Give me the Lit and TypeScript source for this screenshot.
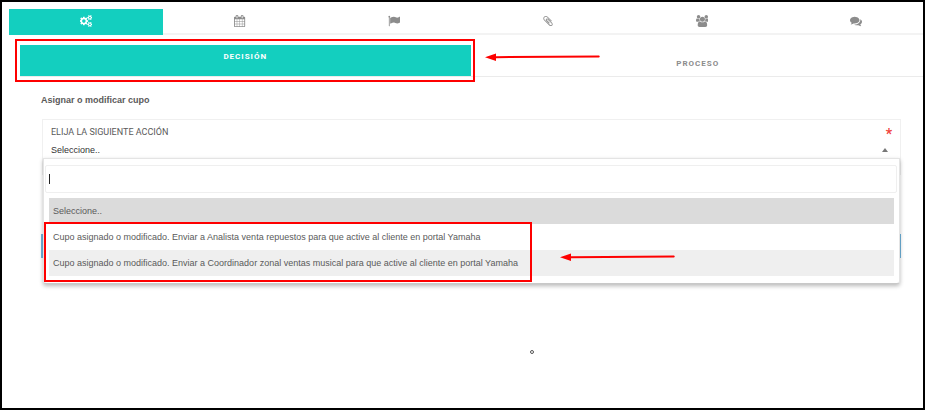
import { LitElement, html, css, svg } from "lit";
import { customElement, state } from "lit/decorators.js";
import { classMap } from "lit/directives/class-map.js";

interface Icon {
  label: string;
  box: string;
  path: string;
}

const ICONS: Icon[] = [
  {
    label: "Acciones",
    box: "0 0 1920 1792",
    path: "M832 896q0-106-75-181t-181-75-181 75-75 181 75 181 181 75 181-75 75-181zm768 512q0-52-38-90t-90-38-90 38-38 90q0 53 37.5 90.5t90.5 37.5 90.5-37.5 37.5-90.5zm0-1024q0-52-38-90t-90-38-90 38-38 90q0 53 37.5 90.5t90.5 37.5 90.5-37.5 37.5-90.5zm-384 421v185q0 10-7 19.5t-16 10.5l-155 24q-11 35-32 76 34 48 90 115 7 11 7 20 0 12-7 19-23 30-82.5 89.5t-78.5 59.5q-11 0-21-7l-115-90q-37 19-77 31-11 108-23 155-7 24-30 24h-186q-11 0-20-7.5t-10-17.5l-23-153q-34-10-75-31l-118 89q-7 7-20 7-11 0-21-8-144-133-144-160 0-9 7-19 10-14 41-53t47-61q-23-44-35-82l-152-24q-10-1-17-9.5t-7-19.5v-185q0-10 7-19.5t16-10.5l155-24q11-35 32-76-34-48-90-115-7-11-7-20 0-12 7-20 22-30 82-89t79-59q11 0 21 7l115 90q34-18 77-32 11-108 23-154 7-24 30-24h186q11 0 20 7.5t10 17.5l23 153q34 10 75 31l118-89q8-7 20-7 11 0 21 8 144 133 144 160 0 8-7 19-12 16-42 54t-45 60q23 48 34 82l152 23q10 2 17 10.5t7 19.5zm640 533v140q0 16-149 31-12 27-30 52 51 113 51 138 0 4-4 7-122 71-124 71-8 0-46-47t-52-68q-20 2-30 2t-30-2q-14 21-52 68t-46 47q-2 0-124-71-4-3-4-7 0-25 51-138-18-25-30-52-149-15-149-31v-140q0-16 149-31 13-29 30-52-51-113-51-138 0-4 4-7 4-2 35-20t59-34 30-16q8 0 46 46.5t52 67.5q20-2 30-2t30 2q51-71 92-112l6-2q4 0 124 70 4 3 4 7 0 25-51 138 17 23 30 52 149 15 149 31zm0-1024v140q0 16-149 31-12 27-30 52 51 113 51 138 0 4-4 7-122 71-124 71-8 0-46-47t-52-68q-20 2-30 2t-30-2q-14 21-52 68t-46 47q-2 0-124-71-4-3-4-7 0-25 51-138-18-25-30-52-149-15-149-31v-140q0-16 149-31 13-29 30-52-51-113-51-138 0-4 4-7 4-2 35-20t59-34 30-16q8 0 46 46.5t52 67.5q20-2 30-2t30 2q51-71 92-112l6-2q4 0 124 70 4 3 4 7 0 25-51 138 17 23 30 52 149 15 149 31z",
  },
  {
    label: "Calendario",
    box: "64 0 1664 1792",
    path: "M192 1664h288v-288h-288v288zm352 0h320v-288h-320v288zm-352-352h288v-320h-288v320zm352 0h320v-320h-320v320zm-352-384h288v-288h-288v288zm736 736h320v-288h-320v288zm-384-736h320v-288h-320v288zm768 736h288v-288h-288v288zm-384-352h320v-320h-320v320zm-352-864v-288q0-13-9.5-22.5t-22.5-9.5h-64q-13 0-22.5 9.5t-9.5 22.5v288q0 13 9.5 22.5t22.5 9.5h64q13 0 22.5-9.5t9.5-22.5zm736 864h288v-320h-288v320zm-384-384h320v-288h-320v288zm384 0h288v-288h-288v288zm32-480v-288q0-13-9.5-22.5t-22.5-9.5h-64q-13 0-22.5 9.5t-9.5 22.5v288q0 13 9.5 22.5t22.5 9.5h64q13 0 22.5-9.5t9.5-22.5zm384-64v1280q0 52-38 90t-90 38h-1408q-52 0-90-38t-38-90v-1280q0-52 38-90t90-38h128v-96q0-66 47-113t113-47h64q66 0 113 47t47 113v96h384v-96q0-66 47-113t113-47h64q66 0 113 47t47 113v96h128q52 0 90 38t38 90z",
  },
  {
    label: "Hitos",
    box: "0 0 1792 1792",
    path: "M320 256q0 72-64 110v1266q0 13-9.5 22.5t-22.5 9.5h-64q-13 0-22.5-9.5t-9.5-22.5v-1266q-64-38-64-110 0-53 37.5-90.5t90.5-37.5 90.5 37.5 37.5 90.5zm1472 64v763q0 25-12.5 38.5t-39.5 27.5q-215 116-369 116-61 0-123.5-22t-108.5-48-115.5-48-142.5-22q-192 0-464 146-17 9-33 9-26 0-45-19t-19-45v-742q0-32 31-55 21-14 79-43 236-120 421-120 107 0 200 29t219 88q38 19 88 19 54 0 117.5-21t110-47 88-47 54.5-21q26 0 45 19t19 45z",
  },
  {
    label: "Adjuntos",
    box: "0 0 1792 1792",
    path: "M1596 1385q0 117-79 196t-196 79q-135 0-235-100l-777-776q-113-115-113-271 0-159 110-270t269-111q158 0 273 113l605 606q10 10 10 22 0 16-30.5 46.5t-46.5 30.5q-13 0-23-10l-606-607q-79-77-181-77-106 0-179 75t-73 181q0 105 76 181l776 777q63 63 145 63 64 0 106-42t42-106q0-82-63-145l-581-581q-26-24-60-24-29 0-48 19t-19 48q0 32 25 59l410 410q10 10 10 22 0 16-31 47t-47 31q-12 0-22-10l-410-410q-63-61-63-149 0-82 57-139t139-57q88 0 149 63l581 581q100 98 100 235z",
  },
  {
    label: "Participantes",
    box: "0 0 1920 1792",
    path: "M593 896q-162 5-265 128h-134q-82 0-138-40.5t-56-118.5q0-353 124-353 6 0 43.5 21t97.5 42.5 119 21.5q67 0 133-23-5 37-5 66 0 139 81 256zm1071 637q0 120-73 189.5t-194 69.5h-874q-121 0-194-69.5t-73-189.5q0-53 3.5-103.5t14-109 26.5-108.5 43-97.5 62-81 85.5-53.5 111.5-20q10 0 43 21.5t73 48 107 48 135 21.5 135-21.5 107-48 73-48 43-21.5q61 0 111.5 20t85.5 53.5 62 81 43 97.5 26.5 108.5 14 109 3.5 103.5zm-1024-1277q0 106-75 181t-181 75-181-75-75-181 75-181 181-75 181 75 75 181zm704 384q0 159-112.5 271.5t-271.5 112.5-271.5-112.5-112.5-271.5 112.5-271.5 271.5-112.5 271.5 112.5 112.5 271.5zm576 225q0 78-56 118.5t-138 40.5h-134q-103-123-265-128 81-117 81-256 0-29-5-66 66 23 133 23 59 0 119-21.5t97.5-42.5 43.5-21q124 0 124 353zm-128-609q0 106-75 181t-181 75-181-75-75-181 75-181 181-75 181 75 75 181z",
  },
  {
    label: "Comentarios",
    box: "0 0 1792 1792",
    path: "M1408 768q0 139-94 257t-256.5 186.5-353.5 68.5q-86 0-176-16-124 88-278 128-36 9-86 16h-3q-11 0-20.5-8t-11.5-21q-1-3-1-6.5t.5-6.5 2-6l2.5-5 3.5-5.5 4-5 4.5-5 4-4.5q5-6 23-25t26-29.5 22.5-29 25-38.5 20.5-44q-124-72-195-177t-71-224q0-139 94-257t256.5-186.5 353.5-68.5 353.5 68.5 256.5 186.5 94 257zm384 256q0 120-71 224.5t-195 176.5q10 24 20.5 44t25 38.5 22.5 29 26 29.5 23 25q1 1 4 4.5t4.5 5 4 5 3.5 5.5l2.5 5 2 6 .5 6.5-1 6.5q-3 14-13 22t-22 7q-50-7-86-16-154-40-278-128-90 16-176 16-271 0-472-132 58 4 88 4 161 0 309-45t264-129q125-92 192-212t67-254q0-77-23-152 129 71 204 178t75 230z",
  },
];

const OPTIONS = [
  "Seleccione..",
  "Cupo asignado o modificado. Enviar a Analista venta repuestos para que active al cliente en portal Yamaha",
  "Cupo asignado o modificado. Enviar a Coordinador zonal ventas musical para que active al cliente en portal Yamaha",
];

@customElement("app-root")
export class AppRoot extends LitElement {
  @state() private section = 0;
  @state() private view = 0;
  @state() private choice = 0;
  @state() private hovered = 2;

  static styles = css`
    :host {
      display: block;
      font-family: "Liberation Sans", Arial, sans-serif;
      font-size: 9px;
      line-height: 12px;
      color: #5a5a5a;
    }
    * {
      box-sizing: border-box;
    }
    button,
    input,
    select {
      font: inherit;
      color: inherit;
      background: none;
      border: 0;
      border-radius: 0;
      margin: 0;
      padding: 0;
      outline: 0;
    }
    button {
      cursor: pointer;
    }
    .frame {
      min-height: 100vh;
      border: 2px solid #000;
      padding: 7px 0 0 7px;
      background: #fff;
      overflow: hidden;
    }
    .sections {
      display: grid;
      grid-template-columns: repeat(6, 1fr);
      margin-right: -10px;
    }
    .section {
      display: flex;
      align-items: center;
      justify-content: center;
      height: 26px;
      color: #8c8c8c;
      border-bottom: 2px solid #f3f3f3;
    }
    .section.on {
      background: #13cfbf;
      border-color: #13cfbf;
      color: #fff;
    }
    .section svg {
      height: 12px;
      fill: currentColor;
    }
    .views {
      position: relative;
      display: grid;
      grid-template-columns: 1fr 1fr;
      column-gap: 2px;
      margin-left: 11px;
      padding-top: 10px;
      border-bottom: 1px solid #ebebeb;
    }
    .view {
      height: 31px;
      padding-top: 6px;
      font-family: Roboto, "Liberation Sans", sans-serif;
      font-size: 8px;
      font-weight: 700;
      letter-spacing: 1px;
      color: #8c8c8c;
    }
    .view.on {
      padding: 0 0 7px;
      background: #13cfbf;
      color: #fff;
    }
    .form {
      padding: 17px 22px 0 32px;
    }
    .title {
      margin: 0 0 13px;
      font-size: 9px;
      line-height: 12px;
      font-weight: 700;
    }
    .field {
      position: relative;
      border: 1px solid #f0f0f0;
      height: 56px;
      margin-left: 1px;
      padding: 6px 8px 0;
    }
    .caption {
      display: flex;
      justify-content: space-between;
      height: 14px;
      font-family: Roboto, "Liberation Sans", sans-serif;
    }
    .star {
      color: #f0433c;
      font-size: 14px;
      font-weight: 700;
      line-height: 16px;
    }
    .pick {
      display: flex;
      align-items: center;
      justify-content: space-between;
      height: 20px;
      padding-right: 4px;
      color: #333;
    }
    .pick select {
      appearance: none;
      flex: 1;
      height: 12px;
    }
    .pick svg {
      width: 6px;
      height: 4px;
      fill: #777;
    }
    .menu {
      position: absolute;
      top: 38px;
      left: 0;
      right: 0;
      padding: 6px 2px 7px 1px;
      background: #fff;
      border: 1px solid #e4e4e4;
      border-radius: 0 0 3px 3px;
      border-bottom-color: #c8c8c8;
      box-shadow: 0 2px 4px rgba(0, 0, 0, 0.28);
    }
    .search {
      display: flex;
      align-items: center;
      height: 28px;
      padding-left: 3px;
      margin-bottom: 5px;
      border: 1px solid #efefef;
      border-radius: 2px;
    }
    .caret {
      width: 1px;
      height: 10px;
      background: #222;
    }
    .search input {
      flex: 1;
      height: 20px;
    }
    .options {
      position: relative;
      display: grid;
      margin: 0 3px 0 4px;
    }
    .option {
      height: 26px;
      padding: 0 4px;
      text-align: left;
    }
    .option.hover {
      background: #efefef;
    }
    .option.on {
      background: #dbdbdb;
    }
    .submit {
      display: block;
      width: 100%;
      height: 24px;
      margin-top: 59px;
      background: #6fb4dc;
    }
    .mark {
      position: absolute;
      border: 2px solid #fe0000;
      pointer-events: none;
    }
    .mark-view {
      top: 4px;
      bottom: -6px;
      left: -5px;
      right: calc(50% - 3px);
    }
    .mark-options {
      top: 24px;
      bottom: -6px;
      left: -5px;
      width: 488px;
    }
    .arrow {
      position: absolute;
      width: 116px;
      height: 10px;
      fill: #fe0000;
    }
    .arrow-view {
      top: 17px;
      left: calc(50% + 13px);
    }
    .arrow-options {
      top: 54px;
      left: 511px;
    }
    .dot {
      display: block;
      width: 4px;
      height: 4px;
      margin: 92px auto 0;
      border: 1px solid #555;
      border-radius: 50%;
    }
    .spinner {
      padding-left: 122px;
    }
  `;

  private arrow(kind: string) {
    return html`<svg class="arrow ${kind}" viewBox="0 0 116 10" aria-hidden="true">
      ${svg`<path d="M0 5.300L11 1.500V4.200L114 3.500Q115.500 4.500 114 5.500L11 6.200V9Z" />`}
    </svg>`;
  }

  render() {
    return html`
      <main class="frame">
        <nav class="sections">
          ${ICONS.map(
            (icon, i) => html`<button
              class=${classMap({ section: true, on: i === this.section })}
              aria-label=${icon.label}
              @click=${() => (this.section = i)}
            >
              <svg viewBox=${icon.box}>${svg`<path d=${icon.path} />`}</svg>
            </button>`
          )}
        </nav>
        <nav class="views">
          ${["DECISIÓN", "PROCESO"].map(
            (name, i) => html`<button
              class=${classMap({ view: true, on: i === this.view })}
              @click=${() => (this.view = i)}
            >
              ${name}
            </button>`
          )}
          <span class="mark mark-view"></span>
          ${this.arrow("arrow-view")}
        </nav>
        <section class="form">
          <h1 class="title">Asignar o modificar cupo</h1>
          <div class="field">
            <div class="caption">
              <label for="action">ELIJA LA SIGUIENTE ACCIÓN</label>
              <span class="star">*</span>
            </div>
            <div class="pick">
              <select id="action" .selectedIndex=${this.choice}>
                ${OPTIONS.map((text) => html`<option>${text}</option>`)}
              </select>
              <svg viewBox="0 0 6 4" aria-hidden="true"><path d="M0 4L3 0L6 4Z" /></svg>
            </div>
            <div class="menu">
              <div class="search">
                <span class="caret"></span>
                <input type="text" aria-label="Buscar" />
              </div>
              <div class="options" role="listbox">
                ${OPTIONS.map(
                  (text, i) => html`<button
                    role="option"
                    aria-selected=${i === this.choice}
                    class=${classMap({ option: true, on: i === this.choice, hover: i === this.hovered })}
                    @mouseenter=${() => (this.hovered = i)}
                    @click=${() => (this.choice = i)}
                  >
                    ${text}
                  </button>`
                )}
                <span class="mark mark-options"></span>
                ${this.arrow("arrow-options")}
              </div>
            </div>
          </div>
          <button class="submit" aria-label="Enviar"></button>
          <div class="spinner"><span class="dot"></span></div>
        </section>
      </main>
    `;
  }
}
